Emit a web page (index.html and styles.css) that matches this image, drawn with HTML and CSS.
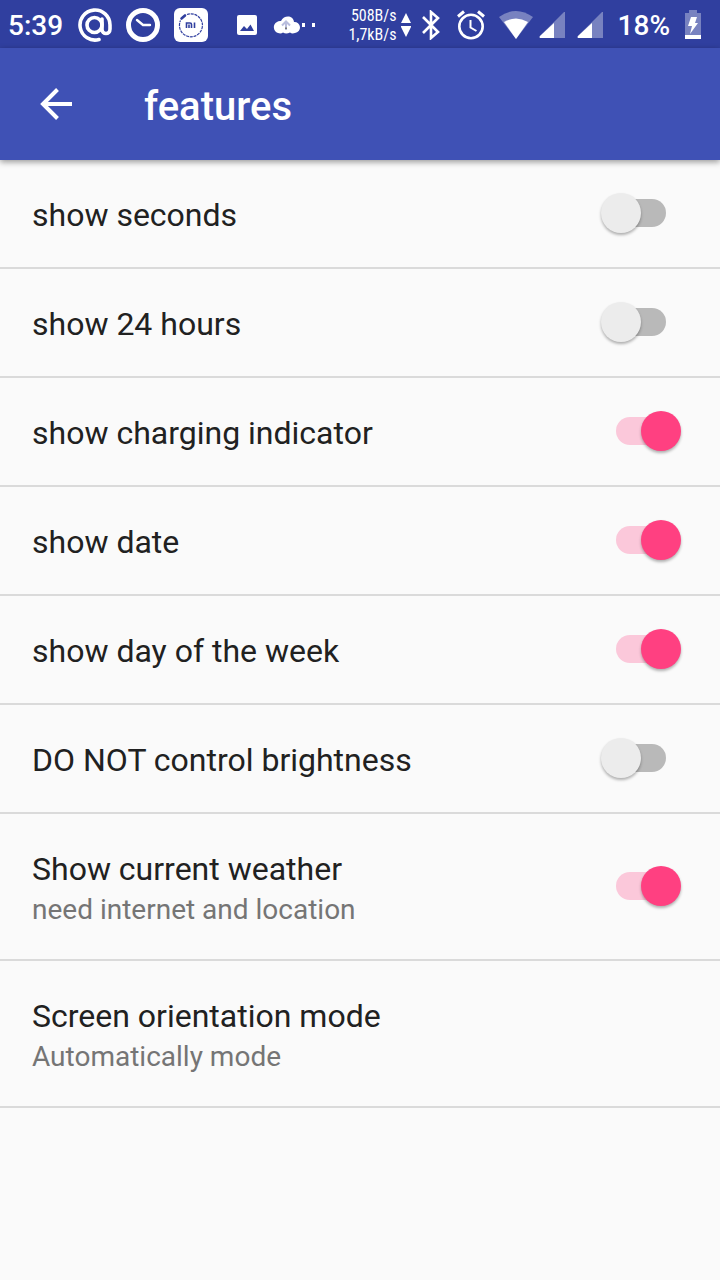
FILE: index.html
```html
<!DOCTYPE html>
<html lang="en">
<head>
<meta charset="utf-8">
<meta name="viewport" content="width=device-width, initial-scale=1">
<title>features</title>
<link rel="stylesheet" href="styles.css">
</head>
<body>
<div class="status">
  <div class="status-group notifications">
    <span class="clock">5:39</span>
    <svg width="34" height="34" viewBox="0 0 34 34" fill="none" stroke="#fff" stroke-width="3.6" stroke-linecap="round"><path d="M21 31.500A15 15 0 1 1 32 17v4c0 6-8 6-8 0V11"/><circle cx="16.500" cy="17" r="7.500"/></svg>
    <svg width="34" height="34" viewBox="0 0 34 34" fill="none" stroke="#fff"><circle cx="17" cy="17" r="14.500" stroke-width="5"/><path d="M11 12l6 5h7" stroke-width="2.400" stroke-linecap="round"/></svg>
    <svg width="34" height="34" viewBox="0 0 34 34" fill="none" stroke="#303f9f"><rect width="34" height="34" rx="6" fill="#fff" stroke="none"/><path d="M13 6.500a11.500 11.500 0 1 1-6.500 6" stroke-width="1.200" stroke-dasharray="3 .8"/><path d="M7.500 10.500l3.500-3" stroke-width="2.600" stroke-linecap="round"/><path d="M12.500 20v-5h3.500q1.500 0 1.500 1.500V20M15 16.500V20M20.500 14.500V20" stroke-width="1.600"/></svg>
    <div class="status-group small">
      <svg width="20" height="20" viewBox="0 0 20 20"><rect width="20" height="20" rx="2" fill="#fff"/><path d="M3 16l4-5 3 3 3.500-4.500L17 16z" fill="#303f9f"/></svg>
      <svg width="44" height="20" viewBox="0 0 44 20" fill="#fff"><path d="M6 18a6 6 0 0 1-1-11 5 5 0 0 1 4-1C12 0 21 0 22 7a5.500 5.500 0 0 1 1 11q-3 1-5-.5-4 2-7 0Q9 19 6 18z"/><path d="M14 15V7m-4 3.500L14 6.500l4 4" fill="none" stroke="#b9bddd" stroke-width="2"/><path d="M13 12.500h2V14h-2z" fill="#777"/><path d="M30 8h3v4h-3zM40 8h3v4h-3z"/></svg>
    </div>
  </div>
  <div class="status-group">
    <div class="speed"><span>508B/s</span><span>1,7kB/s</span></div>
    <svg width="10" height="24" viewBox="0 0 10 24" fill="#fff"><path d="M5 0l5 10H0zM0 14h10L5 24zM0 13h10v1H0z"/></svg>
    <svg class="bluetooth" width="18" height="30" viewBox="0 0 18 30" fill="none" stroke="#fff" stroke-width="2.600"><path d="M1 7l15 15-7 6V2l7 6L1 23"/></svg>
    <svg class="alarm" width="28" height="30" viewBox="0 0 28 30" fill="none" stroke="#fff" stroke-width="2.600"><circle cx="14" cy="16.500" r="11.700"/><path d="M1 6.500L7 1.500M27 6.500l-6-5" stroke-width="3"/><path d="M13.500 10v7.500l6 3.500" stroke-width="2"/></svg>
    <svg class="wifi" width="34" height="28" viewBox="0 0 34 28" fill="#fff"><path d="M17 28L0 6Q17-6 34 6z" opacity=".35"/><path d="M17 28L5 11Q17 4 29 11z"/></svg>
    <svg class="signal" width="26" height="26" viewBox="0 0 26 26" fill="#fff"><path d="M26 0v26H1q-1-1 0-2L25 0z" opacity=".35"/><path d="M15 11v15H1q-1-1 0-2z"/></svg>
    <svg class="signal" width="26" height="26" viewBox="0 0 26 26" fill="#fff"><path d="M26 0v26H1q-1-1 0-2L25 0z" opacity=".35"/><path d="M15 11v15H1q-1-1 0-2z"/></svg>
    <span class="percent">18%</span>
    <svg width="16" height="30" viewBox="0 0 16 30" fill="#fff"><path d="M0 3h4V0h8v3h4v23H0z" opacity=".35"/><path d="M0 25h16v4H0zM6 7h6l-2 6h3L5 24l2-8H3z"/></svg>
  </div>
</div>
<header class="appbar">
  <button class="back" type="button" aria-label="Back"><svg width="32" height="32" viewBox="0 0 32 32" fill="none" stroke="#fff" stroke-width="4"><path d="M32 16H3M17.500 1.500L3 16l14.500 14.500"/></svg></button>
  <h1 class="title">features</h1>
</header>
<main class="list">
  <label class="row"><span class="name">show seconds</span><input class="switch" type="checkbox"></label>
  <label class="row"><span class="name">show 24 hours</span><input class="switch" type="checkbox"></label>
  <label class="row"><span class="name">show charging indicator</span><input class="switch" type="checkbox" checked></label>
  <label class="row"><span class="name">show date</span><input class="switch" type="checkbox" checked></label>
  <label class="row"><span class="name">show day of the week</span><input class="switch" type="checkbox" checked></label>
  <label class="row"><span class="name">DO NOT control brightness</span><input class="switch" type="checkbox"></label>
  <label class="row"><span class="text"><span class="name">Show current weather</span><span class="detail">need internet and location</span></span><input class="switch" type="checkbox" checked></label>
  <button class="row" type="button"><span class="text"><span class="name">Screen orientation mode</span><span class="detail">Automatically mode</span></span></button>
</main>
</body>
</html>
```
FILE: styles.css
```css
* {
  box-sizing: border-box;
}

body {
  margin: 0;
  min-height: 100vh;
  background: #fafafa;
  color: #212121;
  font-family: Roboto, "Noto Sans", sans-serif;
}

svg {
  display: block;
  flex: none;
}

.status {
  display: flex;
  justify-content: space-between;
  align-items: center;
  height: 48px;
  padding: 1px 19px 0 8px;
  background: #303f9f;
  color: #fff;
}

.status-group {
  display: flex;
  align-items: center;
}

.notifications {
  gap: 14px;
}

.clock,
.percent {
  font-size: 28px;
  font-weight: 500;
  line-height: 32px;
  padding-top: 2px;
}

.clock {
  padding-right: 1px;
}

.small {
  gap: 15px;
  margin-left: 15px;
}

.speed {
  display: flex;
  flex-direction: column;
  align-items: flex-end;
  margin-right: 4px;
  font-family: "Roboto Condensed", Roboto, sans-serif;
  font-size: 16px;
  line-height: 19px;
}

.bluetooth {
  margin-left: 11px;
}

.alarm {
  margin-left: 17px;
}

.wifi {
  margin-left: 14px;
}

.signal {
  margin-left: 6px;
}

.signal + .signal {
  margin-left: 12px;
}

.percent {
  margin: 0 15px;
}

.appbar {
  display: flex;
  align-items: center;
  gap: 72px;
  height: 112px;
  padding: 0 40px;
  background: #3f51b5;
  color: #fff;
  box-shadow: 0 2px 6px rgba(0, 0, 0, 0.4);
}

.back {
  padding: 0;
  border: 0;
  background: none;
}

.title {
  margin: 0;
  padding-top: 6px;
  font-size: 40px;
  font-weight: 500;
  line-height: 48px;
}

.row {
  display: flex;
  justify-content: space-between;
  align-items: center;
  width: 100%;
  padding: 32px 39px 33px 32px;
  border: 0;
  border-bottom: 2px solid #dadada;
  background: none;
  color: inherit;
  font: inherit;
  text-align: left;
}

.text {
  display: flex;
  flex-direction: column;
}

.name {
  padding-top: 4px;
  font-size: 32px;
  line-height: 38px;
}

.detail {
  padding-top: 6px;
  color: #757575;
  font-size: 28px;
  line-height: 32px;
}

.switch {
  appearance: none;
  display: flex;
  flex: none;
  width: 50px;
  height: 28px;
  margin: 0 15px;
  border-radius: 14px;
  background: #b9b9b9;
}

.switch::before {
  content: "";
  width: 40px;
  height: 40px;
  margin: -6px 0 0 -15px;
  flex: none;
  border-radius: 50%;
  background: #ececec;
  box-shadow: 0 2px 3px rgba(0, 0, 0, 0.3);
}

.switch:checked {
  background: #fbc8da;
}

.switch:checked::before {
  margin-left: 25px;
  background: #ff4081;
}
```
